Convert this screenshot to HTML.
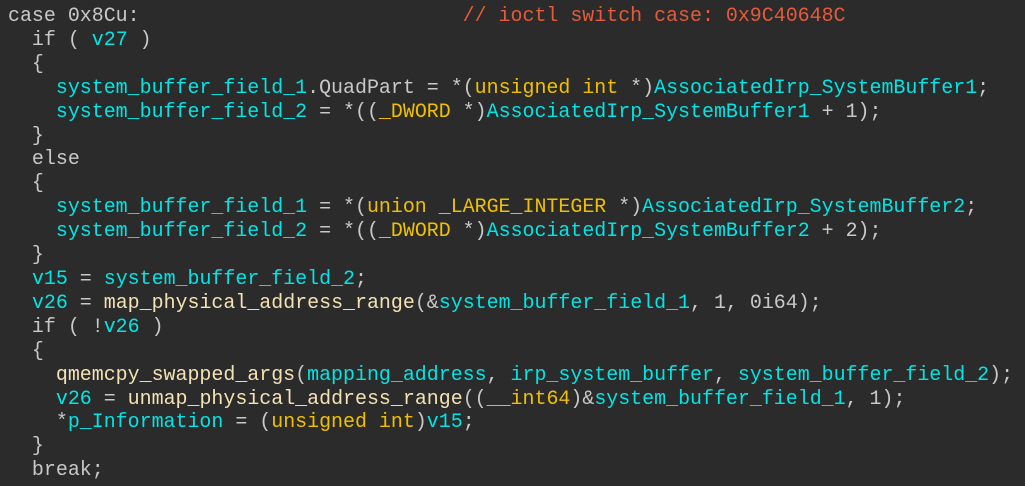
<!DOCTYPE html>
<html><head><meta charset="utf-8"><style>
html,body{margin:0;padding:0;background:#2b2b2b;width:1025px;height:486px;overflow:hidden}
pre{margin:0;padding:4px 0 0 8px;font-family:"Liberation Mono",monospace;font-size:19.95px;line-height:23.9px;color:#c8c8c8;white-space:pre}
.c{color:#00e5e5}.t{color:#f0c000}.f{color:#f2e2b4}.r{color:#e55a3a}
</style></head><body><pre>case 0x8Cu:                           <span class="r">// ioctl switch case: 0x9C40648C</span>
  if ( <span class="c">v27</span> )
  {
    <span class="c">system_buffer_field_1</span>.QuadPart = *(<span class="t">unsigned int</span> *)<span class="c">AssociatedIrp_SystemBuffer1</span>;
    <span class="c">system_buffer_field_2</span> = *((<span class="t">_DWORD</span> *)<span class="c">AssociatedIrp_SystemBuffer1</span> + 1);
  }
  else
  {
    <span class="c">system_buffer_field_1</span> = *(<span class="t">union _LARGE_INTEGER</span> *)<span class="c">AssociatedIrp_SystemBuffer2</span>;
    <span class="c">system_buffer_field_2</span> = *((<span class="t">_DWORD</span> *)<span class="c">AssociatedIrp_SystemBuffer2</span> + 2);
  }
  <span class="c">v15</span> = <span class="c">system_buffer_field_2</span>;
  <span class="c">v26</span> = <span class="f">map_physical_address_range</span>(&amp;<span class="c">system_buffer_field_1</span>, 1, 0i64);
  if ( !<span class="c">v26</span> )
  {
    <span class="f">qmemcpy_swapped_args</span>(<span class="c">mapping_address</span>, <span class="c">irp_system_buffer</span>, <span class="c">system_buffer_field_2</span>);
    <span class="c">v26</span> = <span class="f">unmap_physical_address_range</span>((<span class="t">__int64</span>)&amp;<span class="c">system_buffer_field_1</span>, 1);
    *<span class="c">p_Information</span> = (<span class="t">unsigned int</span>)<span class="c">v15</span>;
  }
  break;</pre></body></html>
